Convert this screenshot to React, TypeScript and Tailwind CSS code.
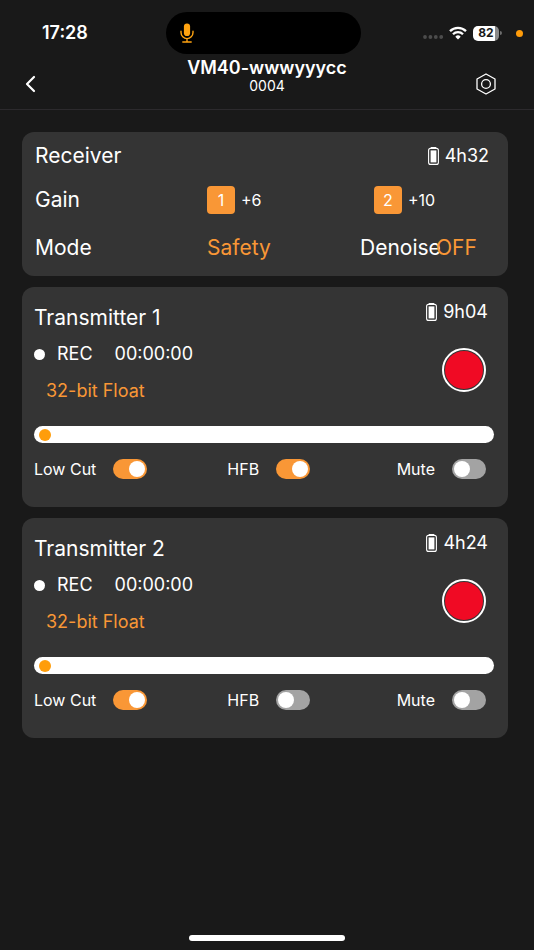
import { useState } from 'react';

interface Transmitter {
  id: number;
  battery: string;
  elapsed: string;
  format: string;
  level: number;
  lowCut: boolean;
  hfb: boolean;
  mute: boolean;
}

const transmitters: Transmitter[] = [
  { id: 1, battery: '9h04', elapsed: '00:00:00', format: '32-bit Float', level: 0, lowCut: true, hfb: true, mute: false },
  { id: 2, battery: '4h24', elapsed: '00:00:00', format: '32-bit Float', level: 0, lowCut: true, hfb: false, mute: false },
];

function StatusBar() {
  return (
    <div className="grid grid-cols-[166fr_195px_173fr] items-center pt-3">
      <span className="pl-[42px] text-lg font-semibold">17:28</span>
      <div className="flex h-[42px] items-center rounded-full bg-black pl-[14px]">
        <svg className="h-5 w-[14px] text-[#ffa310]" viewBox="0 0 14 20" fill="none" stroke="currentColor" strokeWidth="1.4" strokeLinecap="round">
          <rect x="3.9" y="0.5" width="6.2" height="12.5" rx="3.1" fill="currentColor" stroke="none" />
          <path d="M1 8.2v1.4a6 6 0 0 0 12 0V8.2M7 15.8v3M2.8 19h8.4" />
        </svg>
      </div>
      <div className="flex items-center justify-end pr-[11px]">
        <svg className="mt-2 h-1 w-5" viewBox="0 0 20 4" fill="#4c4c4c">
          <circle cx="2" cy="2" r="1.9" />
          <circle cx="7.4" cy="2" r="1.9" />
          <circle cx="12.8" cy="2" r="1.9" />
          <circle cx="18.2" cy="2" r="1.9" />
        </svg>
        <svg className="ml-[6px] h-[14px] w-[18px]" viewBox="0 0 18 14" fill="none" stroke="white" strokeWidth="2.3">
          <path d="M1 5.1a11.4 11.4 0 0 1 16 0" />
          <path d="M4 8.2a7.1 7.1 0 0 1 10 0" />
          <path d="M9 13.4 6.3 10.7a3.8 3.8 0 0 1 5.4 0Z" fill="white" stroke="none" />
        </svg>
        <div className="ml-[6px] flex items-center gap-px">
          <div className="flex h-[15px] w-[26px] items-center justify-center rounded-[5px] bg-linear-to-r from-white from-85% to-[#8a8a8a] to-85% text-xs leading-none font-bold text-[#191919]">
            82
          </div>
          <div className="h-1 w-[2px] rounded-r-full bg-[#6d6d6d]" />
        </div>
        <div className="ml-[14px] size-[7px] rounded-full bg-[#ff9c0a]" />
      </div>
    </div>
  );
}

function NavBar() {
  return (
    <header className="grid h-14 grid-cols-[1fr_auto_1fr] items-center border-b border-[#2c2a2d]">
      <button aria-label="Back" className="ml-[22px] flex h-8 w-4 items-center justify-center pt-1">
        <svg className="h-[18px] w-3" viewBox="0 0 12 18" fill="none" stroke="white" strokeWidth="2.2" strokeLinecap="round" strokeLinejoin="round">
          <path d="M10 2 3 9l7 7" />
        </svg>
      </button>
      <div className="flex flex-col items-center self-start pt-1">
        <h1 className="text-lg leading-5 font-semibold">VM40-wwwyyycc</h1>
        <p className="text-sm leading-4">0004</p>
      </div>
      <button aria-label="Settings" className="mr-[37px] flex h-8 w-[22px] items-center justify-center justify-self-end pt-1">
        <svg className="h-[22px] w-5" viewBox="0 0 20 22" fill="none" stroke="white" strokeWidth="1.3" strokeLinejoin="round">
          <path d="M10 1 19 6v10l-9 5-9-5V6Z" />
          <circle cx="10" cy="11" r="4.4" />
        </svg>
      </button>
    </header>
  );
}

function BatteryTime({ value }: { value: string }) {
  return (
    <div className="flex items-center gap-[6px] text-lg leading-6">
      <svg className="h-[18px] w-[11px]" viewBox="0 0 11 18" fill="none" stroke="white">
        <rect x="0.6" y="1.4" width="9.8" height="16" rx="2" strokeWidth="1.1" />
        <path d="M3.2 0.6h4.6" strokeWidth="1.2" strokeLinecap="round" />
        <rect x="2.6" y="3.4" width="5.8" height="12" fill="white" stroke="none" />
      </svg>
      <span>{value}</span>
    </div>
  );
}

function Gain({ channel, value }: { channel: number; value: string }) {
  return (
    <button className="flex items-center gap-[6px] text-base">
      <span className="flex size-7 items-center justify-center rounded-sm bg-[#f99736]">{channel}</span>
      <span>{value}</span>
    </button>
  );
}

function ReceiverCard() {
  return (
    <section className="rounded-xl bg-[#343434] pt-3 pr-[19px] pb-4 pl-[13px] text-[21px] leading-6">
      <div className="flex items-center justify-between">
        <h2>Receiver</h2>
        <BatteryTime value="4h32" />
      </div>
      <div className="mt-[18px] grid grid-cols-[172fr_167fr_115fr] items-center">
        <span>Gain</span>
        <Gain channel={1} value="+6" />
        <Gain channel={2} value="+10" />
      </div>
      <div className="mt-[22px] grid grid-cols-[172fr_153fr_129fr] items-center">
        <span>Mode</span>
        <button className="justify-self-start text-[#f99736]">Safety</button>
        <div className="flex">
          <span className="w-[76px] whitespace-nowrap">Denoise</span>
          <button className="text-[#f99736]">OFF</button>
        </div>
      </div>
    </section>
  );
}

function Toggle({ label, initial }: { label: string; initial: boolean }) {
  const [on, setOn] = useState(initial);

  return (
    <label className="flex items-center gap-[17px] text-base leading-5">
      {label}
      <input
        type="checkbox"
        role="switch"
        checked={on}
        onChange={() => setOn(!on)}
        className="h-5 w-[34px] appearance-none rounded-full bg-[#a3a3a3] p-[2px] before:block before:size-4 before:rounded-full before:bg-white checked:bg-[#f99736] checked:before:ml-auto"
      />
    </label>
  );
}

function TransmitterCard({ transmitter }: { transmitter: Transmitter }) {
  const [level, setLevel] = useState(transmitter.level);
  const name = `Transmitter ${transmitter.id}`;

  return (
    <section className="rounded-xl bg-[#343434] pt-[13px] pr-[14px] pb-7 pl-3">
      <div className="flex justify-between pr-[6px]">
        <div className="pt-1">
          <h2 className="text-[21px] leading-7">{name}</h2>
          <div className="mt-[10px] flex items-center text-lg leading-6">
            <span className="size-[11px] rounded-full bg-white" />
            <span className="ml-3">REC</span>
            <span className="ml-[22px]">{transmitter.elapsed}</span>
          </div>
          <p className="mt-[13px] pl-3 text-lg leading-6 text-[#f99736]">{transmitter.format}</p>
        </div>
        <div className="flex flex-col items-end">
          <BatteryTime value={transmitter.battery} />
          <button
            aria-label={`Record ${name}`}
            className="mt-6 mr-[2px] flex size-11 items-center justify-center rounded-full border-2 border-white"
          >
            <span className="size-[38px] rounded-full bg-[#f00a24]" />
          </button>
        </div>
      </div>

      <input
        type="range"
        aria-label={`${name} level`}
        min={0}
        max={100}
        value={level}
        onChange={e => setLevel(Number(e.target.value))}
        className="mt-[23px] block h-[17px] w-full appearance-none rounded-full bg-white px-[5px] [&::-webkit-slider-thumb]:size-3 [&::-webkit-slider-thumb]:appearance-none [&::-webkit-slider-thumb]:rounded-full [&::-webkit-slider-thumb]:bg-[#ff9d0a]"
      />

      <div className="mt-4 grid grid-cols-[193fr_169fr_auto] pr-2">
        <Toggle label="Low Cut" initial={transmitter.lowCut} />
        <Toggle label="HFB" initial={transmitter.hfb} />
        <Toggle label="Mute" initial={transmitter.mute} />
      </div>
    </section>
  );
}

export default function App() {
  return (
    <div className="flex min-h-screen flex-col bg-[#191919] font-[Inter,sans-serif] text-white">
      <StatusBar />
      <NavBar />
      <main className="flex flex-1 flex-col gap-[11px] pt-[22px] pr-[26px] pl-[22px]">
        <ReceiverCard />
        {transmitters.map(t => (
          <TransmitterCard key={t.id} transmitter={t} />
        ))}
      </main>
      <div className="mx-auto mb-[9px] h-[6px] w-[156px] rounded-full bg-white" />
    </div>
  );
}
